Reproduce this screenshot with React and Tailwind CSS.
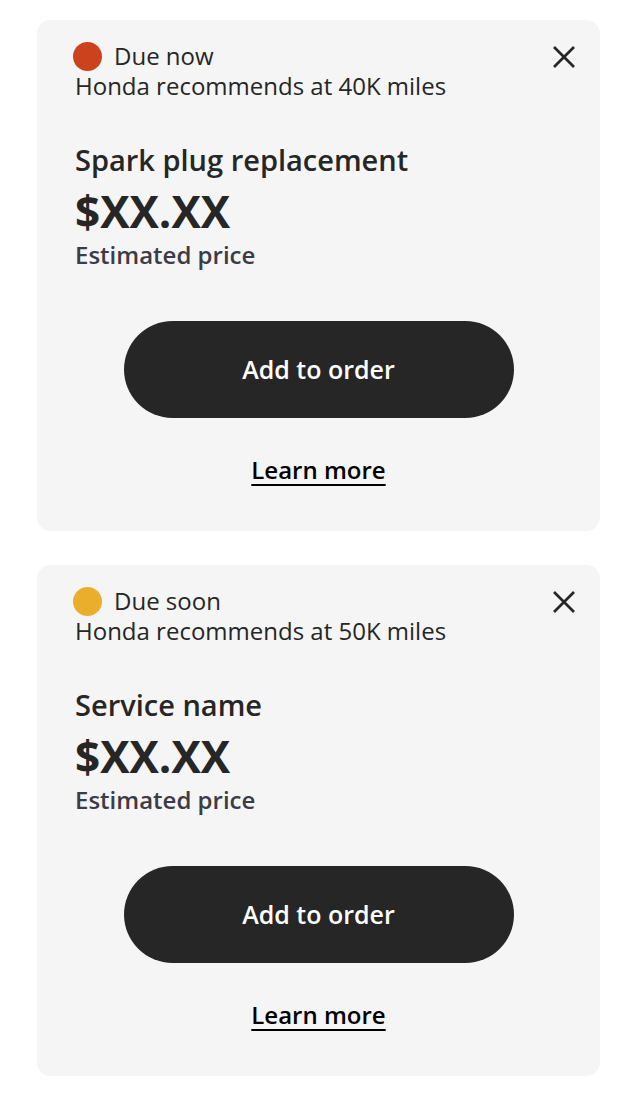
const SERVICES = [
  { status: "Due now", dot: "bg-[#cb421d]", miles: "40K", name: "Spark plug replacement" },
  { status: "Due soon", dot: "bg-[#ebae2c]", miles: "50K", name: "Service name" },
];

const CloseIcon = () => (
  <svg className="w-6 h-6 text-[#262626]" viewBox="0 0 24 24" fill="none" stroke="currentColor" strokeWidth="2.6" strokeLinecap="butt">
    <line x1="2" y1="2" x2="22" y2="22" />
    <line x1="22" y1="2" x2="2" y2="22" />
  </svg>
);

const ServiceCard = ({ status, dot, miles, name }) => (
  <div className="rounded-[14px] bg-[#f5f5f5] px-[38px] pt-[21px] pb-[46px] text-[#262626]">
    {/* Header */}
    <div className="flex items-start justify-between">
      <div className="flex flex-col">
        <div className="flex items-center gap-[12px] text-[24px] leading-[30px]">
          <span className={`-ml-[2px] w-[29px] h-[29px] rounded-full ${dot}`} />
          <span>{status}</span>
        </div>
        <p className="text-[24px] leading-[30px]">Honda recommends at {miles} miles</p>
      </div>
      <button className="mt-[4px] -mr-[14px]">
        <CloseIcon />
      </button>
    </div>

    {/* Service + price */}
    <h2 className="mt-[42px] text-[29px] leading-[34px] font-semibold">{name}</h2>
    <p className="mt-[8px] text-[44px] leading-[52px] font-bold">$XX.XX</p>
    <p className="mt-[3px] text-[24px] leading-[30px] font-semibold text-[#3c3c46]">Estimated price</p>

    {/* Actions */}
    <div className="mt-[51px] flex flex-col items-center">
      <button className="w-[390px] h-[97px] rounded-full bg-[#262626] text-white text-[25px] font-semibold">
        Add to order
      </button>
      <a href="#" className="mt-[37px] text-[24px] leading-[30px] font-semibold text-black underline underline-offset-[5px] decoration-2">
        Learn more
      </a>
    </div>
  </div>
);

export default function App() {
  return (
    <div className="min-h-[1112px] bg-white pl-[37px] pr-[40px] pt-[20px] flex flex-col gap-[34px] font-['Open_Sans',sans-serif]">
      {SERVICES.map((s) => (
        <ServiceCard key={s.status} {...s} />
      ))}
    </div>
  );
}
